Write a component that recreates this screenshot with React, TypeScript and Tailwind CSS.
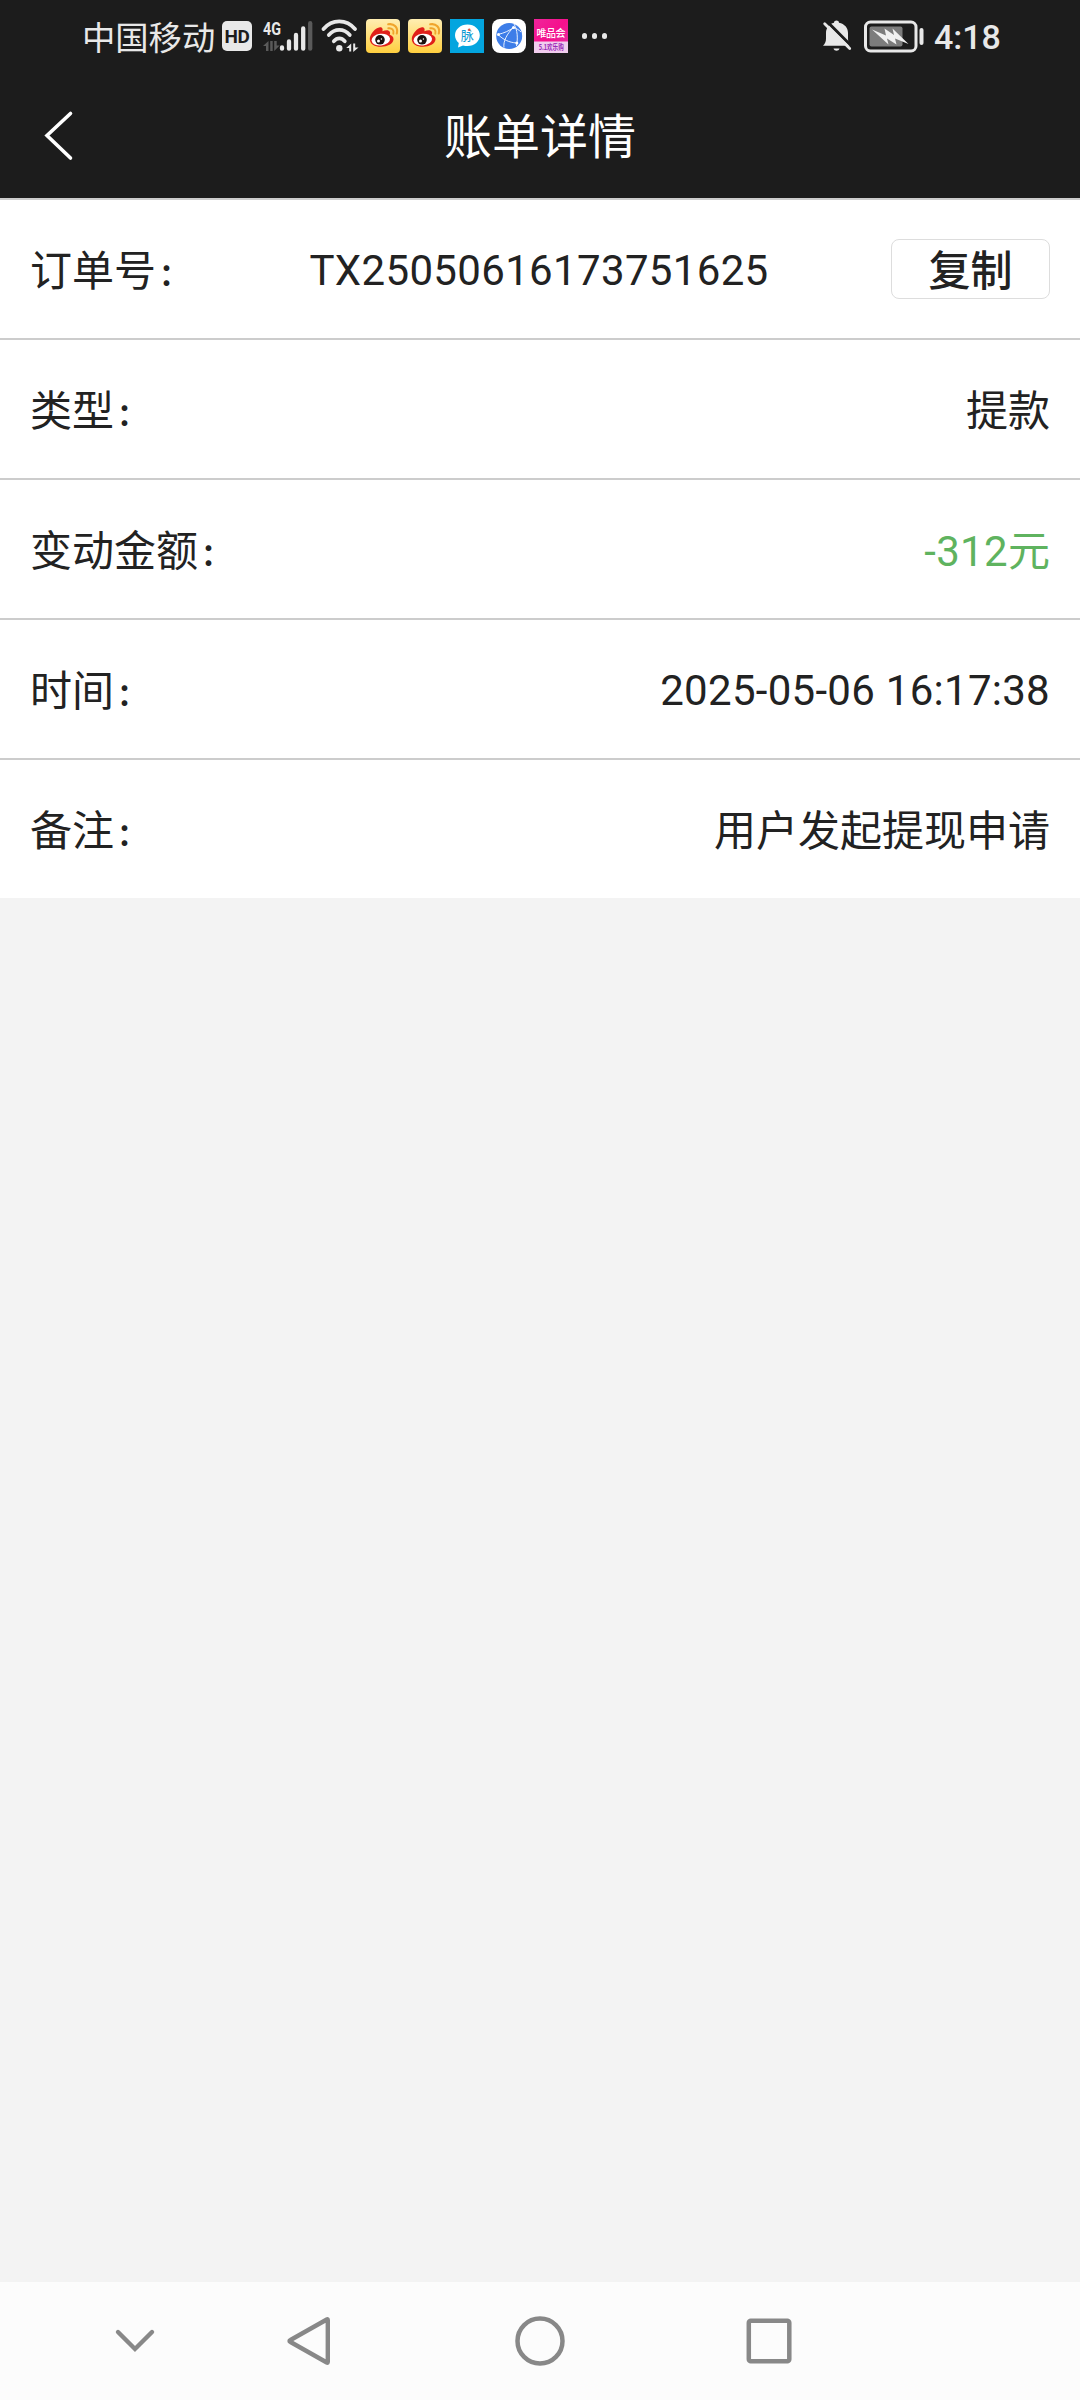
import React from 'react';

interface BillRowProps {
  label: string;
  last?: boolean;
  children: React.ReactNode;
}

const WeiboIcon = () => (
  <svg className="h-[34px] w-[34px] shrink-0" viewBox="0 0 34 34">
    <defs>
      <linearGradient id="weibo-bg" x1="0" y1="0" x2="0" y2="1">
        <stop offset="0" stopColor="#ffeeb2" />
        <stop offset="1" stopColor="#ffcf3f" />
      </linearGradient>
    </defs>
    <rect width="34" height="34" rx="4" fill="url(#weibo-bg)" />
    <path
      d="M3.800 20C3.800 15 9.500 8.500 14 8.200c2.600 0 3 2 2.400 4 3-1.400 6.600-1.600 7.400.6.500 1.200.2 2.200-.1 3 2.400.8 4 2.200 3.800 4.800-.4 4.400-6 7.200-12.500 7.200C8.500 27.800 3.800 25 3.800 20z"
      fill="#e01f19"
    />
    <ellipse cx="14.800" cy="20.600" rx="9.300" ry="5.800" fill="#fff" transform="rotate(-6 15 20.800)" />
    <circle cx="14" cy="20.800" r="4.800" fill="#1a1210" />
    <circle cx="12.500" cy="22" r="1.500" fill="#fff" />
    <circle cx="15.400" cy="20" r=".7" fill="#fff" />
    <path d="M22.300 9.300c3.600-.6 6 1.800 5 5.400" fill="none" stroke="#f0a52c" strokeWidth="1.900" strokeLinecap="round" />
    <path d="M22.200 5.300c6-1.200 10.200 3.400 8.600 9.300" fill="none" stroke="#f0a52c" strokeWidth="2.100" strokeLinecap="round" />
  </svg>
);

const MaimaiIcon = () => (
  <svg className="h-[34px] w-[34px] shrink-0" viewBox="0 0 34 34">
    <rect width="34" height="34" fill="#03a5df" />
    <path d="M17.500 5.500C10.500 5.500 5 10.300 5 16.300c0 3.200 1.500 5.800 3.800 7.800L8 28.500l5-2.100c1.400.5 3 .7 4.500.7 7 0 12.300-4.800 12.300-10.800S24.500 5.500 17.500 5.500z" fill="#fff" />
    <text x="17.300" y="21" textAnchor="middle" fontSize="13" fontFamily="'Noto Sans CJK SC', sans-serif" fill="#0b9bd3">脉</text>
    <circle cx="19.300" cy="10.800" r="1.200" fill="#e8503a" />
  </svg>
);

const BrowserIcon = () => (
  <svg className="h-[34px] w-[34px] shrink-0" viewBox="0 0 34 34">
    <rect width="34" height="34" rx="8" fill="#fff" />
    <circle cx="17.200" cy="17" r="13" fill="#3d7de8" />
    <g fill="none" stroke="#e8f1ff" strokeWidth="1">
      <path d="M22 5C25.500 11 26 19 24.500 27" />
      <path d="M6 15.500C12 14 17 12 21.500 8.500" />
      <path d="M6 15.500c5 5 11 8 18.500 8.500" />
      <path d="M12 28.500c-1-6 3-14 9.500-20" />
      <path d="M21.500 8.500c3 1 5.500 2.500 7.500 4.500" />
    </g>
    <circle cx="21.500" cy="8.500" r="1.500" fill="#fff" />
    <circle cx="6.500" cy="15.500" r="1.500" fill="#fff" />
    <circle cx="24.800" cy="24" r="1.500" fill="#fff" />
  </svg>
);

const VipshopIcon = () => (
  <svg className="h-[34px] w-[34px] shrink-0 overflow-visible" viewBox="0 0 34 34">
    <defs>
      <linearGradient id="vip-bg" x1="0" y1="0" x2="1" y2="1">
        <stop offset="0" stopColor="#f0249b" />
        <stop offset=".5" stopColor="#f5108c" />
        <stop offset="1" stopColor="#e534ac" />
      </linearGradient>
    </defs>
    <rect width="34" height="34" fill="url(#vip-bg)" />
    <rect y="22.500" width="34" height="11.500" fill="#f1cdee" />
    <text x="17" y="18.300" textAnchor="middle" fontSize="10" fontWeight="500" textLength="29" fontFamily="'Noto Sans CJK SC', sans-serif" fill="#fff">唯品会</text>
    <text x="17.200" y="31" textAnchor="middle" fontSize="7.500" fontWeight="700" textLength="25" lengthAdjust="spacingAndGlyphs" fontFamily="'Noto Sans CJK SC', sans-serif" fill="#9a2bb8">5.1欢乐购</text>
  </svg>
);

const SignalIcon = () => (
  <svg className="h-[34px] w-[52px] shrink-0" viewBox="0 0 52 34">
    <text x="1" y="15.500" fontSize="18" fontWeight="700" textLength="18" lengthAdjust="spacingAndGlyphs" fontFamily="Roboto, sans-serif" fill="#e8e8e8">4G</text>
    <g fill="#5a5a5a">
      <path d="M6.500 22v10h-2.500v-5H1z" />
      <path d="M10.700 22v10H8.200v-10z" />
      <path d="M12.200 22h2.500v4.500h3L12.200 32z" />
    </g>
    <g strokeWidth="4.300" strokeLinecap="round" stroke="#e8e8e8">
      <path d="M20 28.500v1.200M27 22.500v7.200M34 16v13.700M41.200 9.500v20.200" />
      <path d="M48.200 4.200v25.500" stroke="#5a5a5a" />
    </g>
  </svg>
);

const WifiIcon = () => (
  <svg className="h-[34px] w-[38px] shrink-0" viewBox="0 0 38 34">
    <g fill="none" stroke="#e8e8e8" strokeWidth="3.700" strokeLinecap="round">
      <path d="M2.500 10C11-.2 25.500-.2 34 10" />
      <path d="M7.800 16c6-6.800 15-6.800 21 0" />
      <path d="M12.800 22.300c3.400-3.800 7.600-3.800 11 0" />
    </g>
    <circle cx="18.300" cy="29.300" r="3.200" fill="#e8e8e8" />
    <path d="M30.200 24.500v8h-2v-3.500h-3zM32.200 24.500h2v4h3.300l-5.300 4.500z" fill="#e8e8e8" />
  </svg>
);

const BellOffIcon = () => (
  <svg className="h-[34px] w-[30px] shrink-0" viewBox="0 0 30 34">
    <path
      d="M1 26.800c2-2.300 3-4 3-7.300v-5.500c0-5 3.300-9.200 8-10.200 0-3 5-3 5 0 5.600 1.200 9 5 9 10.200v5.500c0 3.300 1 5 2.500 7.300z"
      fill="#e8e8e8"
    />
    <path d="M11.500 29.500h6c-.8 3-5.200 3-6 0z" fill="#e8e8e8" />
    <path d="M5.500 3L30 27.500" stroke="#1c1c1c" strokeWidth="3" />
    <path d="M2.700 4.700L27.700 29.500" stroke="#e8e8e8" strokeWidth="2.800" strokeLinecap="round" />
  </svg>
);

const BatteryIcon = () => (
  <svg className="h-[34px] w-[62px] shrink-0" viewBox="0 0 62 34">
    <rect x="1.500" y="3" width="50.500" height="29" rx="5" fill="none" stroke="#e8e8e8" strokeWidth="3" />
    <rect x="5.500" y="7.500" width="33" height="20" rx="2" fill="#7c7c7c" />
    <path d="M8 10.500L22 16.500 20.500 9.500 30 16 28.500 9.500 44.500 25 31 19.500 32.500 25.500 23 19.500 24.500 25.500z" fill="#f0f0f0" />
    <path d="M57.500 11v13" stroke="#e8e8e8" strokeWidth="4" strokeLinecap="round" />
  </svg>
);

const StatusBar = () => (
  <div className="flex h-[72px] items-center pl-[82px] text-[#e8e8e8]">
    <span className="w-[140px] shrink-0 whitespace-nowrap pt-[5px] text-[33.300px] leading-none">中国移动</span>
    <span className="flex h-[30px] w-[30px] shrink-0 items-center justify-center rounded-[5px] bg-[#e8e8e8] text-[19px] font-bold leading-none tracking-[-0.500px] text-[#1c1c1c]">
      HD
    </span>
    <div className="ml-[10px] flex items-center">
      <SignalIcon />
      <div className="ml-[7px] mr-[7px] flex">
        <WifiIcon />
      </div>
      <div className="flex gap-2">
        <WeiboIcon />
        <WeiboIcon />
        <MaimaiIcon />
        <BrowserIcon />
        <VipshopIcon />
      </div>
      <div className="ml-[13.500px] flex gap-[4.500px]">
        <span className="h-[5.500px] w-[5.500px] rounded-full bg-[#e8e8e8]" />
        <span className="h-[5.500px] w-[5.500px] rounded-full bg-[#e8e8e8]" />
        <span className="h-[5.500px] w-[5.500px] rounded-full bg-[#e8e8e8]" />
      </div>
    </div>
    <div className="ml-auto mr-[80px] flex items-center">
      <BellOffIcon />
      <div className="ml-3 mr-2 flex">
        <BatteryIcon />
      </div>
      <span className="w-[66px] whitespace-nowrap pt-[1px] text-[34px] font-medium leading-none">4:18</span>
    </div>
  </div>
);

const Header = () => (
  <div className="grid h-[126px] grid-cols-3 items-center pb-[1px]">
    <svg className="ml-[40px] h-[56px] w-[36px]" viewBox="0 0 36 56" fill="none">
      <path d="M30.500 6.500L7 28.500 30.500 51" stroke="#fff" strokeWidth="3.600" strokeLinecap="round" />
    </svg>
    <h1 className="pt-[6px] text-center text-[48px] leading-none text-white">账单详情</h1>
  </div>
);

const BillRow = ({ label, last = false, children }: BillRowProps) => (
  <div
    className={
      last
        ? 'flex h-[138px] items-center justify-between px-[30px]'
        : 'flex h-[140px] items-center justify-between border-b-2 border-[#cccccc] px-[30px]'
    }
  >
    <span className="pt-[6px]">
      {label}
      <span className="inline-block w-[42px] -translate-y-px pl-[3px] text-[30px] font-bold leading-none">：</span>
    </span>
    {children}
  </div>
);

const NavBar = () => (
  <div className="flex h-[118px] items-center bg-[#fcfcfc] pl-[105px]">
    <svg className="h-[60px] w-[60px]" viewBox="0 0 60 60" fill="none" stroke="#888" strokeWidth="4.400" strokeLinecap="round">
      <path d="M13 21L30 38 47 21" />
    </svg>
    <svg className="ml-[115px] h-[60px] w-[60px]" viewBox="0 0 60 60" fill="none" stroke="#888" strokeWidth="4.400" strokeLinejoin="round">
      <path d="M46.800 8.500Q47.800 7.800 47.800 9.500V50.500Q47.800 52.200 46.800 51.500L10.500 31Q8.500 30 10.500 29z" />
    </svg>
    <svg className="ml-[170px] h-[60px] w-[60px]" viewBox="0 0 60 60" fill="none" stroke="#888" strokeWidth="4.500">
      <circle cx="30" cy="30" r="22.500" />
    </svg>
    <svg className="ml-[169px] h-[60px] w-[60px]" viewBox="0 0 60 60" fill="none" stroke="#888" strokeWidth="4.500">
      <rect x="9.800" y="9.800" width="40.500" height="40.500" rx="2" />
    </svg>
  </div>
);

export default function App() {
  return (
    <div className="flex h-[2400px] w-[1080px] flex-col overflow-hidden bg-[#f3f3f3] font-[Roboto,'Noto_Sans_CJK_SC',sans-serif]">
      <div className="bg-[#1c1c1c]">
        <StatusBar />
        <Header />
      </div>
      <main className="flex-1">
        <div className="border-t-2 border-[#cccccc] bg-white text-[42px] leading-none text-[#222222]">
          <BillRow label="订单号">
            <span className="mr-[11px] pt-[4px] tracking-[0.340px]">TX25050616173751625</span>
            <button className="h-[60px] w-[159px] rounded-lg border border-[#dddddd] pt-[6px] font-medium leading-none">
              复制
            </button>
          </BillRow>
          <BillRow label="类型">
            <span className="pt-[6px]">提款</span>
          </BillRow>
          <BillRow label="变动金额">
            <span className="pt-[6px] text-[#5fb35f]">
              <span className="tracking-[0.340px]">-312</span>元
            </span>
          </BillRow>
          <BillRow label="时间">
            <span className="pt-[4px] tracking-[0.280px]">2025-05-06 16:17:38</span>
          </BillRow>
          <BillRow label="备注" last>
            <span className="pt-[6px]">用户发起提现申请</span>
          </BillRow>
        </div>
      </main>
      <NavBar />
    </div>
  );
}
